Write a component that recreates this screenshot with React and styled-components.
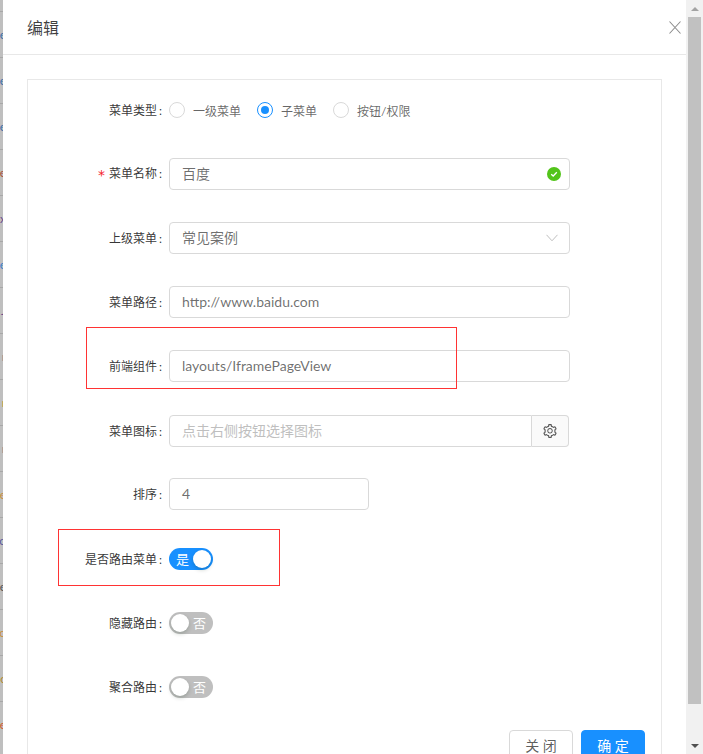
import React from 'react'
import styled, { createGlobalStyle } from 'styled-components'
import { AiOutlineSetting } from 'react-icons/ai'

const GlobalStyle = createGlobalStyle`
    html, body {
        margin : 0;
        padding : 0;
        background : #fff;
        overflow : hidden;
    }
    body {
        font-family : Lato, "Noto Sans CJK SC", sans-serif;
    }
`

const Page = styled.div`
    position : relative;
    width : 703px;
    height : 754px;
    display : flex;
    overflow : hidden;
`

const Strip = styled.div`
    width : 3px;
    flex : none;
    background : #bfbfbf;
    padding-top : 11px;
    overflow : hidden;
`
const StripRow = styled.div`
    height : 45px;
    border-top : 1px solid #a8a8a8;
    display : flex;
    align-items : center;
    justify-content : flex-end;
    font-size : 12px;
    line-height : 16px;
    color : ${props => props.$color};
`
const StripChar = styled.span`
    flex : none;
    margin-right : -3px;
`

const Modal = styled.div`
    width : 683px;
    flex : none;
    background : #fff;
    overflow : hidden;
`
const Header = styled.div`
    height : 54px;
    border-bottom : 1px solid #e8e8e8;
    padding : 0 5px 0 24px;
    display : flex;
    align-items : center;
    justify-content : space-between;
`
const Title = styled.div`
    font-size : 16px;
    color : rgba(0, 0, 0, 0.75);
`
const Body = styled.div`
    padding : 24px 24px 0;
`
const Card = styled.div`
    border : 1px solid #e8e8e8;
    padding : 14px 16px 0 0;
    display : flex;
    flex-direction : column;
`
const Row = styled.div`
    height : 32px;
    margin-bottom : ${props => props.$after || 32}px;
    display : flex;
    align-items : center;
`
const Label = styled.label`
    width : 141px;
    flex : none;
    padding : 0 7px 2px 0;
    box-sizing : border-box;
    text-align : right;
    font-size : 12px;
    color : rgba(0, 0, 0, 0.8);
    white-space : nowrap;
    &::after {
        content : ":";
        margin-left : 2px;
    }
`
const Required = styled.span`
    color : #f5222d;
    margin-right : 4px;
    font-family : "DejaVu Sans", sans-serif;
    font-size : 14px;
    line-height : 1;
    vertical-align : -2px;
`
const Radios = styled.div`
    display : flex;
    gap : 16px;
`
const RadioItem = styled.div`
    display : flex;
    align-items : center;
    gap : 8px;
    font-size : 12px;
    color : rgba(0, 0, 0, 0.6);
`
const RadioDot = styled.span`
    width : 16px;
    height : 16px;
    box-sizing : border-box;
    border-radius : 50%;
    border : 1px solid ${props => props.$checked ? '#1890ff' : '#d9d9d9'};
    display : flex;
    align-items : center;
    justify-content : center;
    &::after {
        content : "";
        display : ${props => props.$checked ? 'block' : 'none'};
        width : 8px;
        height : 8px;
        border-radius : 50%;
        background : #1890ff;
    }
`
const Field = styled.div`
    width : ${props => props.$width || 401}px;
    height : 32px;
    box-sizing : border-box;
    border : 1px solid #d9d9d9;
    border-radius : 4px;
    padding : 0 11px 1px 12px;
    display : flex;
    align-items : center;
    justify-content : space-between;
    font-size : 14px;
    color : ${props => props.$placeholder ? '#bfbfbf' : 'rgba(0, 0, 0, 0.58)'};
    white-space : nowrap;
`
const ChineseText = styled.span`
    margin-bottom : 2px;
`
const Group = styled.div`
    width : 400px;
    height : 32px;
    display : flex;
`
const GroupField = styled(Field)`
    flex : 1;
    width : auto;
    border-radius : 4px 0 0 4px;
`
const Addon = styled.div`
    width : 37px;
    flex : none;
    box-sizing : border-box;
    border : 1px solid #d9d9d9;
    border-left : 0;
    border-radius : 0 4px 4px 0;
    background : #fafafa;
    color : rgba(0, 0, 0, 0.65);
    display : flex;
    align-items : center;
    justify-content : center;
`
const Switch = styled.div`
    width : 44px;
    height : 22px;
    box-sizing : border-box;
    border-radius : 11px;
    padding : 0 2px;
    background : ${props => props.$on ? '#1890ff' : '#bfbfbf'};
    display : flex;
    flex-direction : ${props => props.$on ? 'row' : 'row-reverse'};
    align-items : center;
    justify-content : space-between;
    font-size : 13px;
    color : #fff;
`
const SwitchText = styled.span`
    margin : 0 ${props => props.$on ? 0 : 5}px 2px ${props => props.$on ? 5 : 0}px;
`
const Knob = styled.span`
    width : 18px;
    height : 18px;
    border-radius : 50%;
    background : #fff;
    box-shadow : 0 2px 4px rgba(0, 35, 11, 0.2);
`
const Footer = styled.div`
    margin-top : -5px;
    display : flex;
    justify-content : flex-end;
    gap : 8px;
`
const Button = styled.button`
    width : 64px;
    height : 32px;
    padding : 0 0 3px;
    box-sizing : border-box;
    border : 1px solid ${props => props.$primary ? '#1890ff' : '#d9d9d9'};
    border-radius : 4px;
    background : ${props => props.$primary ? '#1890ff' : '#fff'};
    color : ${props => props.$primary ? '#fff' : 'rgba(0, 0, 0, 0.65)'};
    font-family : inherit;
    font-size : 14px;
`
const ScrollBar = styled.div`
    width : 17px;
    flex : none;
    background : #f1f1f1;
    display : flex;
    flex-direction : column;
    align-items : center;
`
const ArrowBox = styled.div`
    height : 17px;
    flex : none;
    display : flex;
    align-items : center;
    justify-content : center;
`
const Arrow = styled.span`
    width : 0;
    height : 0;
    border-left : 4px solid transparent;
    border-right : 4px solid transparent;
    ${props => props.$down
        ? 'border-top : 4px solid #505050;'
        : 'border-bottom : 4px solid #a3a3a3;'}
`
const Thumb = styled.div`
    width : 13px;
    height : 687px;
    flex : none;
    background : #c1c1c1;
`
const Spacer = styled.div`
    flex : 1;
`
const CheckSvg = styled.svg`
    margin-right : -3px;
`
// red boxes drawn over the form as annotations
const Mark = styled.div`
    position : absolute;
    left : ${props => props.$left}px;
    top : ${props => props.$top}px;
    width : ${props => props.$width}px;
    height : ${props => props.$height}px;
    box-sizing : border-box;
    border : 1px solid #f33;
    pointer-events : none;
`

const stripRows = [
    ['e', '#3d6fa8'], ['e', '#3d6fa8'], ['e', '#3d6fa8'], ['e', '#a8553d'],
    ['x', '#6a4a8c'], ['e', '#3d7fc8'], ['J', '#6a4a8c'], ['r', '#667788'],
    ['r', '#c89040'], ['r', '#667788'], ['e', '#c89040'], ['o', '#5a5a9c'],
    ['e', '#555'], ['o', '#c89040'], ['c', '#b08a30'], ['e', '#d06030'],
]

const CloseIcon = () => (
    <svg width="12" height="13" viewBox="0 0 12 13" fill="none" stroke="#8c8c8c" strokeWidth="1.1">
        <path d="M0.5 0.5 L11.5 12.5 M11.5 0.5 L0.5 12.5" />
    </svg>
)

const CheckIcon = () => (
    <CheckSvg width="14" height="14" viewBox="0 0 14 14">
        <circle cx="7" cy="7" r="7" fill="#52c41a" />
        <path d="M4.2 7.2 L6.2 9 L9.8 5.2" fill="none" stroke="#fff" strokeWidth="1.3" />
    </CheckSvg>
)

const ChevronIcon = () => (
    <svg width="12" height="8" viewBox="0 0 12 8" fill="none" stroke="#bfbfbf" strokeWidth="1">
        <path d="M0.5 0.8 L6 6.8 L11.5 0.8" />
    </svg>
)

export default function App() {
    return (
        <Page>
            <GlobalStyle />
            <Strip>
                {stripRows.map(([ch, color], i) => (
                    <StripRow key={i} $color={color}><StripChar>{ch}</StripChar></StripRow>
                ))}
            </Strip>
            <Modal>
                <Header>
                    <Title>编辑</Title>
                    <CloseIcon />
                </Header>
                <Body>
                    <Card>
                        <Row>
                            <Label>菜单类型</Label>
                            <Radios>
                                <RadioItem><RadioDot />一级菜单</RadioItem>
                                <RadioItem><RadioDot $checked />子菜单</RadioItem>
                                <RadioItem><RadioDot />按钮/权限</RadioItem>
                            </Radios>
                        </Row>
                        <Row>
                            <Label><Required>*</Required>菜单名称</Label>
                            <Field><ChineseText>百度</ChineseText><CheckIcon /></Field>
                        </Row>
                        <Row>
                            <Label>上级菜单</Label>
                            <Field><ChineseText>常见案例</ChineseText><ChevronIcon /></Field>
                        </Row>
                        <Row>
                            <Label>菜单路径</Label>
                            <Field>http://www.baidu.com</Field>
                        </Row>
                        <Row $after={33}>
                            <Label>前端组件</Label>
                            <Field>layouts/IframePageView</Field>
                        </Row>
                        <Row $after={31}>
                            <Label>菜单图标</Label>
                            <Group>
                                <GroupField $placeholder><ChineseText>点击右侧按钮选择图标</ChineseText></GroupField>
                                <Addon><AiOutlineSetting size={16} /></Addon>
                            </Group>
                        </Row>
                        <Row $after={33}>
                            <Label>排序</Label>
                            <Field $width={200}>4</Field>
                        </Row>
                        <Row>
                            <Label>是否路由菜单</Label>
                            <Switch $on><SwitchText $on>是</SwitchText><Knob /></Switch>
                        </Row>
                        <Row>
                            <Label>隐藏路由</Label>
                            <Switch><SwitchText>否</SwitchText><Knob /></Switch>
                        </Row>
                        <Row>
                            <Label>聚合路由</Label>
                            <Switch><SwitchText>否</SwitchText><Knob /></Switch>
                        </Row>
                        <Footer>
                            <Button>关 闭</Button>
                            <Button $primary>确 定</Button>
                        </Footer>
                    </Card>
                </Body>
            </Modal>
            <ScrollBar>
                <ArrowBox><Arrow /></ArrowBox>
                <Thumb />
                <Spacer />
                <ArrowBox><Arrow $down /></ArrowBox>
            </ScrollBar>
            <Mark $left={86} $top={327} $width={371} $height={62} />
            <Mark $left={58} $top={529} $width={222} $height={57} />
        </Page>
    )
}
